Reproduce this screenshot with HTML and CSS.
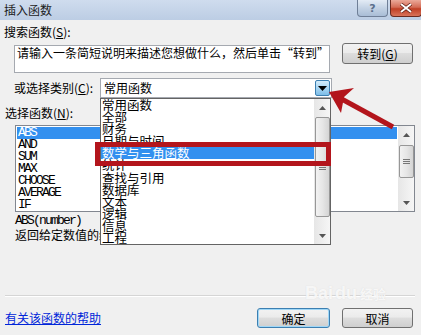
FILE: index.html
```html
<!DOCTYPE html>
<html>
<head>
<meta charset="utf-8">
<link rel="stylesheet" href="styles.css">
</head>
<body>
<div class="dialog">
  <div class="titlebar">
    <span class="title">插入函数</span>
    <div class="tbtns">
      <span class="tbtn help">?</span>
      <span class="tbtn close">
        <svg width="14" height="10" viewBox="0 0 14 10"><path d="M2 1 L12 9 M12 1 L2 9" stroke="#5a1a10" stroke-width="3.4"/><path d="M2 1 L12 9 M12 1 L2 9" stroke="#fff" stroke-width="2"/></svg>
      </span>
    </div>
  </div>

  <div class="label l-search">搜索函数(<u>S</u>):</div>
  <div class="search-row">
    <div class="textbox">请输入一条简短说明来描述您想做什么，然后单击“转到”</div>
    <button class="btn go">转到(<u>G</u>)</button>
  </div>

  <div class="cat-row">
    <span class="cat-label">或选择类别(<u>C</u>):</span>
    <div class="select">
      <span>常用函数</span>
      <span class="drop-btn"><svg width="9" height="5" viewBox="0 0 9 5"><path d="M0 0 H9 L4.5 5 Z" fill="#000"/></svg></span>
    </div>
  </div>

  <div class="label l-func">选择函数(<u>N</u>):</div>
  <div class="listbox">
    <div class="items">
      <div class="item sel">ABS</div>
      <div class="item">AND</div>
      <div class="item">SUM</div>
      <div class="item">MAX</div>
      <div class="item">CHOOSE</div>
      <div class="item">AVERAGE</div>
      <div class="item">IF</div>
    </div>
    <div class="vscroll lb-scroll">
      <span class="sarrow"><svg width="7" height="4" viewBox="0 0 7 4"><path d="M0 4 L3.5 0 L7 4 Z" fill="#555"/></svg></span>
      <span class="thumb lb-thumb"><span class="grip"></span></span>
      <span class="strack"></span>
      <span class="sarrow"><svg width="7" height="4" viewBox="0 0 7 4"><path d="M0 0 H7 L3.5 4 Z" fill="#555"/></svg></span>
    </div>
  </div>
  <div class="sig">ABS(number)</div>
  <div class="desc">返回给定数值的绝对值，即不带符号的数值</div>

  <div class="sep"></div>

  <div class="footer">
    <a class="help-link" href="#">有关该函数的帮助</a>
    <div class="btns">
      <button class="btn ok">确定</button>
      <button class="btn cancel">取消</button>
    </div>
  </div>

  <div class="watermark"><span class="wm-bai">Bai</span><span class="wm-du">du</span><span class="wm-jy">经验</span></div>

  <div class="dropdown">
    <div class="dd-items">
      <div class="dd-item">常用函数</div>
      <div class="dd-item">全部</div>
      <div class="dd-item">财务</div>
      <div class="dd-item">日期与时间</div>
      <div class="dd-item dd-sel">数学与三角函数</div>
      <div class="dd-item">统计</div>
      <div class="dd-item">查找与引用</div>
      <div class="dd-item">数据库</div>
      <div class="dd-item">文本</div>
      <div class="dd-item">逻辑</div>
      <div class="dd-item">信息</div>
      <div class="dd-item">工程</div>
    </div>
    <div class="vscroll dd-scroll">
      <span class="sarrow"><svg width="7" height="4" viewBox="0 0 7 4"><path d="M0 4 L3.5 0 L7 4 Z" fill="#555"/></svg></span>
      <span class="thumb dd-thumb"><span class="grip"></span></span>
      <span class="strack"></span>
      <span class="sarrow"><svg width="7" height="4" viewBox="0 0 7 4"><path d="M0 0 H7 L3.5 4 Z" fill="#555"/></svg></span>
    </div>
  </div>

  <div class="redbox"></div>
  <svg class="annot" width="421" height="335" viewBox="0 0 421 335">
    <path d="M393 127 L338 97" stroke="#b3151c" stroke-width="5" fill="none"/>
    <path d="M329 92 L354 88 L344 97 L341 113 Z" fill="#b3151c"/>
  </svg>
</div>
</body>
</html>
```
FILE: styles.css
```css
html, body {
  margin: 0;
  padding: 0;
  background: #f0f0f0;
}

.dialog {
  position: relative;
  width: 421px;
  height: 335px;
  overflow: hidden;
  background: #f0f0f0;
  font-family: "Noto Sans CJK SC", "Noto Sans", sans-serif;
  font-size: 12px;
  color: #000;
}

u { text-decoration: underline; }

/* title bar */
.titlebar {
  height: 20px;
  display: flex;
  justify-content: space-between;
  background: linear-gradient(#cfdcee, #bccde4);
}
.title {
  padding-left: 4px;
  line-height: 20px;
  font-size: 12px;
  color: #1c1c1c;
}
.tbtns {
  display: flex;
  gap: 2px;
  margin-right: -1px;
}
.tbtn {
  box-sizing: border-box;
  height: 17px;
  border: 1px solid #6f7f97;
  border-top: none;
  border-radius: 0 0 4px 4px;
  display: flex;
  align-items: center;
  justify-content: center;
}
.help {
  width: 31px;
  background: linear-gradient(#e3ebf5, #c3d2e4 50%, #a9bdd6);
  color: #5b6f8c;
  font-family: "DejaVu Sans", sans-serif;
  font-size: 11px;
  font-weight: bold;
}
.close {
  width: 32px;
  border-color: #6b2a1f;
  background: linear-gradient(#eba999, #d46c56 45%, #c03f25 55%, #d9735a);
}

/* labels */
.label {
  line-height: 16px;
}
.l-search {
  margin: 4px 0 0 4px;
}

/* search row */
.search-row {
  display: flex;
  align-items: flex-start;
  margin-top: 3px;
  padding-left: 14px;
}
.textbox {
  box-sizing: border-box;
  width: 316px;
  height: 28px;
  margin-top: 2px;
  border: 1px solid #a5a9b0;
  background: #fff;
  padding: 0 2px;
  line-height: 14px;
  white-space: nowrap;
  overflow: hidden;
}

.btn {
  box-sizing: border-box;
  height: 21px;
  padding: 0;
  border: 1px solid #707070;
  border-radius: 3px;
  background: linear-gradient(#f2f2f2, #ebebeb 45%, #dddddd 50%, #cfcfcf);
  font-family: "Noto Sans CJK SC", sans-serif;
  font-size: 12px;
  line-height: 17px;
  color: #000;
}
.go {
  width: 71px;
  margin-left: 12px;
}

/* category row */
.cat-row {
  display: flex;
  align-items: center;
  height: 20px;
  margin-top: 5px;
  padding-left: 14px;
}
.cat-label {
  width: 86px;
  line-height: 16px;
}
.select {
  box-sizing: border-box;
  width: 232px;
  height: 20px;
  border: 1px solid #a5a9b0;
  background: #fff;
  display: flex;
  align-items: center;
  justify-content: space-between;
  padding-left: 3px;
  line-height: 16px;
}
.drop-btn {
  box-sizing: border-box;
  width: 15px;
  height: 16px;
  margin-right: 1px;
  border: 1px solid #3c7fb1;
  border-radius: 2px;
  background: linear-gradient(#d4ecfa, #a9d6f3 50%, #7dbde7);
  display: flex;
  align-items: center;
  justify-content: center;
}

.l-func {
  margin: 7px 0 0 5px;
}

/* function list */
.listbox {
  box-sizing: border-box;
  width: 400px;
  height: 87px;
  margin: 4px 0 0 15px;
  border: 1px solid #828790;
  background: #fff;
  display: flex;
}
.items {
  flex: 1;
  padding: 1px 1px 0 1px;
}
.item {
  height: 12px;
  line-height: 12px;
  padding-left: 1px;
  font-family: "Liberation Mono", monospace;
  font-size: 13px;
  letter-spacing: -1.8px;
}
.sel {
  background: #3390ef;
  color: #fff;
}

/* scrollbars */
.vscroll {
  width: 16px;
  display: flex;
  flex-direction: column;
  align-items: center;
  background: linear-gradient(90deg, #e6e6e6, #f6f6f6);
}
.sarrow {
  height: 17px;
  display: flex;
  align-items: center;
  justify-content: center;
}
.strack { flex: 1; }
.thumb {
  box-sizing: border-box;
  width: 15px;
  border: 1px solid #979797;
  border-radius: 2px;
  background: linear-gradient(90deg, #f2f2f2, #e6e6e6 50%, #d4d4d4);
  display: flex;
  align-items: center;
  justify-content: center;
}
.lb-thumb {
  height: 33px;
  margin-top: 2px;
}
.dd-thumb {
  height: 100px;
  margin-top: 1px;
}
.grip {
  width: 7px;
  height: 5px;
  border-top: 1px solid #777;
  border-bottom: 1px solid #777;
  box-sizing: border-box;
  position: relative;
}
.grip::after {
  content: "";
  position: absolute;
  left: 0;
  right: 0;
  top: 1px;
  border-top: 1px solid #777;
}

.sig {
  margin: 2px 0 0 15px;
  line-height: 14px;
  font-family: "Liberation Mono", monospace;
  font-size: 13px;
  letter-spacing: -1.8px;
}
.desc {
  margin-left: 15px;
  line-height: 14px;
  white-space: nowrap;
}

.sep {
  margin: 53px 6px 0 5px;
  border-top: 1px solid #d5d5d5;
  border-bottom: 1px solid #fff;
}

/* footer */
.footer {
  display: flex;
  align-items: center;
  justify-content: space-between;
  margin-top: 11px;
  padding: 0 8px 0 5px;
}
.help-link {
  color: #0026d9;
  text-decoration: underline;
  line-height: 14px;
}
.btns {
  display: flex;
  gap: 12px;
}
.ok {
  width: 73px;
  height: 20px;
  border-color: #3c7fb1;
  box-shadow: inset 0 0 0 1px #9fd7f7;
}
.cancel {
  width: 71px;
  height: 20px;
}

/* watermark */
.watermark {
  position: absolute;
  left: 305px;
  top: 283px;
  display: flex;
  align-items: baseline;
  font-family: "Liberation Sans", sans-serif;
  font-weight: bold;
  font-size: 18px;
  color: rgba(255, 255, 255, 0.8);
  text-shadow: 0 0 1px rgba(200, 200, 200, 0.6);
}
.wm-du {
  margin-left: 2px;
}
.wm-jy {
  margin-left: 3px;
  font-family: "Noto Sans CJK SC", sans-serif;
  font-size: 13px;
}

/* dropdown overlay */
.dropdown {
  position: absolute;
  left: 100px;
  top: 98px;
  box-sizing: border-box;
  width: 231px;
  height: 147px;
  border: 1px solid #646464;
  background: #fff;
  display: flex;
}
.dd-items {
  flex: 1;
}
.dd-item {
  height: 12.1px;
  line-height: 12px;
  padding-left: 1px;
  font-size: 12.5px;
  white-space: nowrap;
}
.dd-sel {
  background: #3390ef;
  color: #fff;
}

.redbox {
  position: absolute;
  left: 95px;
  top: 142px;
  box-sizing: border-box;
  width: 236px;
  height: 24px;
  border: 5px solid #b3151c;
}

.annot {
  position: absolute;
  left: 0;
  top: 0;
  pointer-events: none;
}
```
